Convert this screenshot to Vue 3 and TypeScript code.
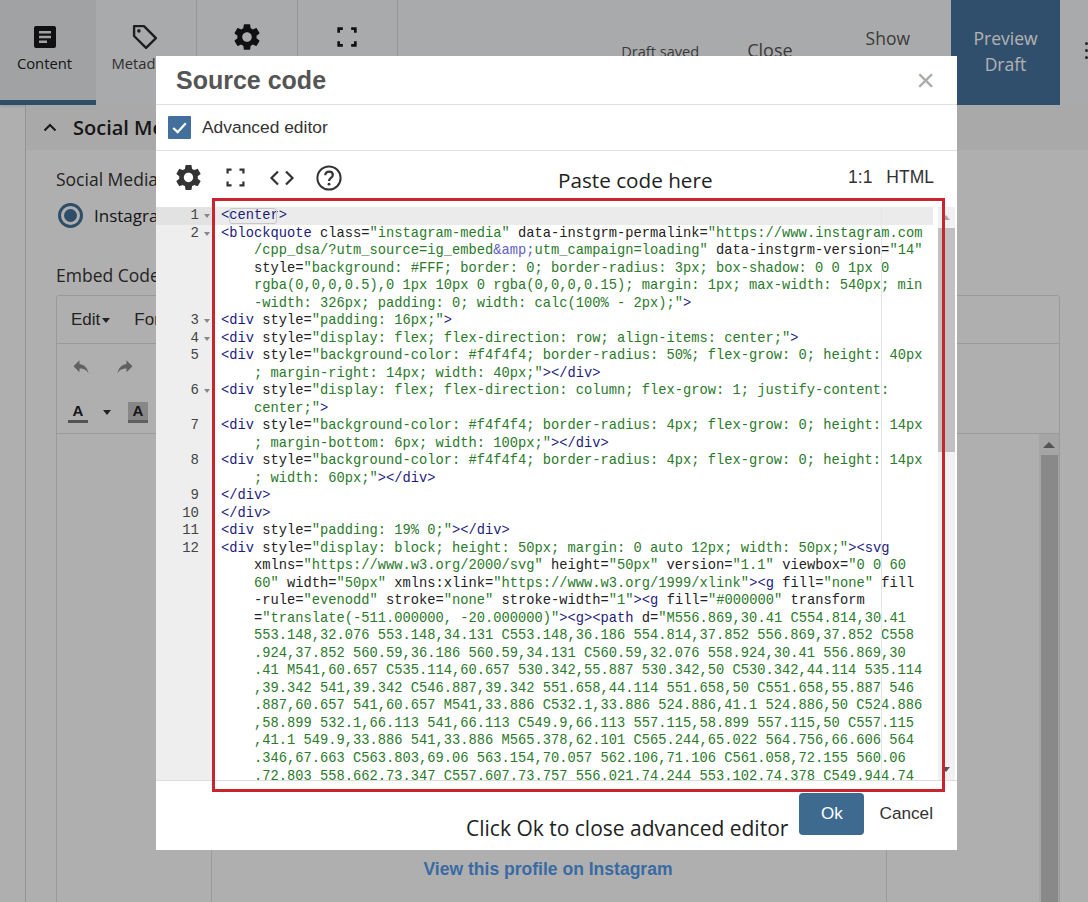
<script setup lang="ts">
const gear = 'M19.14 12.94c.04-.3.06-.61.06-.94 0-.32-.02-.64-.07-.94l2.03-1.58c.18-.14.23-.41.12-.61l-1.92-3.32c-.12-.22-.37-.29-.59-.22l-2.39.96c-.5-.38-1.03-.7-1.62-.94l-.36-2.54c-.04-.24-.24-.41-.48-.41h-3.84c-.24 0-.43.17-.47.41l-.36 2.54c-.59.24-1.13.57-1.62.94l-2.39-.96c-.22-.08-.47 0-.59.22L2.74 8.87c-.12.21-.08.47.12.61l2.03 1.58c-.05.3-.09.63-.09.94s.02.64.07.94l-2.03 1.58c-.18.14-.23.41-.12.61l1.92 3.32c.12.22.37.29.59.22l2.39-.96c.5.38 1.03.7 1.62.94l.36 2.54c.05.24.24.41.48.41h3.84c.24 0 .44-.17.47-.41l.36-2.54c.59-.24 1.13-.56 1.62-.94l2.39.96c.22.08.47 0 .59-.22l1.92-3.32c.12-.22.07-.47-.12-.61l-2.01-1.58zM12 15.6c-1.98 0-3.6-1.62-3.6-3.6s1.62-3.6 3.6-3.6 3.6 1.62 3.6 3.6-1.62 3.6-3.6 3.6z'
const corners = 'M2 7V2h5M17 2h5v5M22 17v5h-5M7 22H2v-5'

type Row = { n?: number; fold?: boolean; text: string }
const rows: Row[] = [
  { n: 1, fold: true, text: '<center>' },
  { n: 2, fold: true, text: '<blockquote class="instagram-media" data-instgrm-permalink="https://www.instagram.com' },
  { text: '    /cpp_dsa/?utm_source=ig_embed&amp;utm_campaign=loading" data-instgrm-version="14"' },
  { text: '    style="background: #FFF; border: 0; border-radius: 3px; box-shadow: 0 0 1px 0' },
  { text: '    rgba(0,0,0,0.5),0 1px 10px 0 rgba(0,0,0,0.15); margin: 1px; max-width: 540px; min' },
  { text: '    -width: 326px; padding: 0; width: calc(100% - 2px);">' },
  { n: 3, fold: true, text: '<div style="padding: 16px;">' },
  { n: 4, fold: true, text: '<div style="display: flex; flex-direction: row; align-items: center;">' },
  { n: 5, text: '<div style="background-color: #f4f4f4; border-radius: 50%; flex-grow: 0; height: 40px' },
  { text: '    ; margin-right: 14px; width: 40px;"></div>' },
  { n: 6, fold: true, text: '<div style="display: flex; flex-direction: column; flex-grow: 1; justify-content:' },
  { text: '    center;">' },
  { n: 7, text: '<div style="background-color: #f4f4f4; border-radius: 4px; flex-grow: 0; height: 14px' },
  { text: '    ; margin-bottom: 6px; width: 100px;"></div>' },
  { n: 8, text: '<div style="background-color: #f4f4f4; border-radius: 4px; flex-grow: 0; height: 14px' },
  { text: '    ; width: 60px;"></div>' },
  { n: 9, text: '</div>' },
  { n: 10, text: '</div>' },
  { n: 11, text: '<div style="padding: 19% 0;"></div>' },
  { n: 12, text: '<div style="display: block; height: 50px; margin: 0 auto 12px; width: 50px;"><svg' },
  { text: '    xmlns="https://www.w3.org/2000/svg" height="50px" version="1.1" viewbox="0 0 60' },
  { text: '    60" width="50px" xmlns:xlink="https://www.w3.org/1999/xlink"><g fill="none" fill' },
  { text: '    -rule="evenodd" stroke="none" stroke-width="1"><g fill="#000000" transform' },
  { text: '    ="translate(-511.000000, -20.000000)"><g><path d="M556.869,30.41 C554.814,30.41' },
  { text: '    553.148,32.076 553.148,34.131 C553.148,36.186 554.814,37.852 556.869,37.852 C558' },
  { text: '    .924,37.852 560.59,36.186 560.59,34.131 C560.59,32.076 558.924,30.41 556.869,30' },
  { text: '    .41 M541,60.657 C535.114,60.657 530.342,55.887 530.342,50 C530.342,44.114 535.114' },
  { text: '    ,39.342 541,39.342 C546.887,39.342 551.658,44.114 551.658,50 C551.658,55.887 546' },
  { text: '    .887,60.657 541,60.657 M541,33.886 C532.1,33.886 524.886,41.1 524.886,50 C524.886' },
  { text: '    ,58.899 532.1,66.113 541,66.113 C549.9,66.113 557.115,58.899 557.115,50 C557.115' },
  { text: '    ,41.1 549.9,33.886 541,33.886 M565.378,62.101 C565.244,65.022 564.756,66.606 564' },
  { text: '    .346,67.663 C563.803,69.06 563.154,70.057 562.106,71.106 C561.058,72.155 560.06' },
  { text: '    .72.803 558.662.73.347 C557.607.73.757 556.021.74.244 553.102.74.378 C549.944.74' },
]

type Seg = { c: string; t: string }
function tokenize(list: Row[]): Seg[][] {
  let inTag = false
  let inName = false
  let inStr = false
  return list.map((row) => {
    const segs: Seg[] = []
    const push = (c: string, t: string) => {
      const last = segs[segs.length - 1]
      if (last && last.c === c) last.t += t
      else segs.push({ c, t })
    }
    const s = row.text
    for (let i = 0; i < s.length; i++) {
      const ch = s[i]
      if (inStr) {
        if (s.startsWith('&amp;', i)) {
          push('ent', '&amp;')
          i += 4
          continue
        }
        push('str', ch)
        if (ch === '"') inStr = false
      } else if (ch === '<') {
        inTag = true
        inName = true
        push('tag', ch)
      } else if (ch === '>') {
        inTag = false
        inName = false
        push('tag', ch)
      } else if (inName) {
        if (ch === ' ') {
          inName = false
          push('atr', ch)
        } else push('tag', ch)
      } else if (ch === '"' && inTag) {
        inStr = true
        push('str', ch)
      } else push('atr', ch)
    }
    return segs
  })
}
const tokens = tokenize(rows)
const lines = rows.map((r, i) => ({ ...r, segs: tokens[i] }))
</script>

<template>
  <div class="page">
    <header class="topbar">
      <nav class="tabs">
        <div class="tab active">
          <svg class="tab-icon" viewBox="0 0 24 24"><path fill="#17181a" d="M3 1h18a2 2 0 0 1 2 2v18a2 2 0 0 1-2 2H3a2 2 0 0 1-2-2V3a2 2 0 0 1 2-2zm3 5v2.4h12V6zm0 4.8v2.4h12v-2.4zm0 4.8V18h8v-2.4z" /></svg>
          <span>Content</span>
        </div>
        <div class="tab second-tab">
          <svg class="tab-icon" viewBox="0 0 24 24"><path fill="none" stroke="#2b2c2e" stroke-width="2.3" stroke-linejoin="round" d="M2 2h9.5L23 13.5 13.5 23 2 11.5z" /><circle cx="6.6" cy="6.6" r="1.7" fill="#2b2c2e" /></svg>
          <span>Metadata</span>
        </div>
        <div class="tab">
          <svg class="tab-icon big" viewBox="0 0 24 24"><path fill="#17181a" :d="gear" /></svg>
        </div>
        <div class="tab">
          <svg class="tab-icon small" viewBox="0 0 24 24"><path fill="none" stroke="#17181a" stroke-width="3.2" :d="corners" /></svg>
        </div>
      </nav>
      <div class="actions">
        <span class="saved">Draft saved</span>
        <span class="close-link">Close</span>
        <span class="show">Show</span>
        <div class="preview">Preview<br />Draft</div>
        <div class="more"><i></i><i></i><i></i></div>
      </div>
    </header>

    <main class="body">
      <section class="panel">
        <div class="panel-head">
          <svg class="chev" viewBox="0 0 14 9"><path d="M1.5 7.5 7 2l5.5 5.5" fill="none" stroke="#222" stroke-width="2" /></svg>
          <strong>Social Media</strong>
        </div>
        <div class="panel-body">
          <div class="label">Social Media</div>
          <div class="radio-row"><span class="radio"><span></span></span><span>Instagram</span></div>
          <div class="label embed">Embed Code</div>
          <div class="tiny">
            <div class="tiny-menu"><span>Edit<i class="caret"></i></span><span class="fmt">Format</span></div>
            <div class="tiny-tools">
              <div class="tool-row">
                <svg class="u" viewBox="0 0 24 24"><path fill="#8b8b8b" d="M10 8V3L2 11l8 8v-5c6 0 10 2 12 7-1-7-5-12-12-13z" /></svg>
                <svg class="u" viewBox="0 0 24 24"><path fill="#8b8b8b" d="M14 8V3l8 8-8 8v-5C8 14 4 16 2 21c1-7 5-12 12-13z" /></svg>
              </div>
              <div class="tool-row second">
                <span class="afore">A</span><i class="caret dark"></i><span class="aback">A</span>
              </div>
            </div>
            <div class="tiny-area">
              <div class="embed-card"><a>View this profile on Instagram</a></div>
              <div class="tiny-scroll"><b></b><span></span></div>
            </div>
          </div>
        </div>
      </section>
    </main>

    <div class="backdrop"></div>

    <div class="modal">
      <div class="m-head"><h1>Source code</h1><span class="x">×</span></div>
      <div class="m-check">
        <span class="cb"><svg viewBox="0 0 22 22"><path d="M5 11.5l4.2 4L17 7" fill="none" stroke="#fff" stroke-width="2.2" /></svg></span>
        <span>Advanced editor</span>
      </div>
      <div class="m-tools">
        <svg class="mi gear" viewBox="0 0 24 24"><path fill="#333" :d="gear" /></svg>
        <svg class="mi corners" viewBox="0 0 24 24"><path fill="none" stroke="#333" stroke-width="2.8" :d="corners" /></svg>
        <svg class="mi angle" viewBox="0 0 26 18"><path fill="none" stroke="#333" stroke-width="2.2" d="M9 2.5 2.5 9 9 15.5M17 2.5 23.5 9 17 15.5" /></svg>
        <svg class="mi help" viewBox="0 0 26 26"><circle cx="13" cy="13" r="11.6" fill="none" stroke="#333" stroke-width="2" /><path fill="none" stroke="#333" stroke-width="2.2" d="M9.3 10.2c0-2.2 1.6-3.6 3.8-3.6s3.7 1.3 3.7 3.3c0 3-3.8 2.9-3.8 6" /><circle cx="13" cy="19.2" r="1.4" fill="#333" /></svg>
        <span class="paste">Paste code here</span>
        <span class="pos">1:1</span>
        <span class="mode">HTML</span>
      </div>
      <div class="editor">
        <div class="code">
          <div v-for="(l, i) in lines" :key="i" class="row" :class="{ on: i === 0 }">
            <span class="gut"><span class="num">{{ l.n }}</span><i v-if="l.fold" class="fold"></i></span>
            <span class="src"><span v-for="(s, j) in l.segs" :key="j" :class="s.c">{{ s.t }}</span></span>
          </div>
          <div class="margin-line"></div>
          <div class="bracket"></div>
        </div>
        <div class="sb"><i class="sb-up"></i><b></b><i class="sb-down"></i></div>
      </div>
      <div class="m-foot">
        <span class="click">Click Ok to close advanced editor</span>
        <button class="ok">Ok</button>
        <span class="cancel">Cancel</span>
      </div>
      <div class="redbox"></div>
    </div>
  </div>
</template>

<style>
html, body { margin: 0; height: 100%; overflow: hidden; }
</style>

<style scoped>
.page {
  position: relative;
  width: 1088px;
  height: 902px;
  overflow: hidden;
  background: #fbfbfb;
  font-family: "Open Sans", sans-serif;
  color: #222;
}
.topbar {
  height: 105px;
  display: flex;
  justify-content: space-between;
  background: #f3f4f6;
  box-shadow: 0 1px 3px rgba(0,0,0,.15);
  position: relative;
}
.tabs { display: flex; }
.tab {
  width: 100.8px;
  box-sizing: border-box;
  border-right: 1px solid #d6d7da;
  display: flex;
  flex-direction: column;
  align-items: center;
  padding-top: 25px;
  font-size: 14.8px;
  color: #444;
  gap: 5px;
}
.tab.active {
  width: 96px;
  background: #e6e8eb;
  border-bottom: 5px solid #436f95;
  border-right: 0;
  color: #222;
  padding-right: 7px;
}
.tab.active span { margin-top: -1px; }
.second-tab { padding-right: 3px; }
.tab-icon { width: 24px; height: 24px; flex: none; }
.second-tab .tab-icon { width: 25px; height: 25px; margin-top: -1px; margin-bottom: -1px; }
.tab-icon.big { width: 32px; height: 32px; margin-top: -4px; }
.tab-icon.small { width: 20px; height: 20px; margin-top: 2px; }
.actions { display: flex; align-items: flex-start; }
.saved { font-size: 14.6px; margin: 41px 48px 0 0; color: #555; }
.close-link { font-size: 18px; margin: 38px 73px 0 0; color: #555; }
.show { font-size: 17.5px; margin: 26px 41px 0 0; color: #555; }
.preview {
  width: 109px;
  height: 105px;
  box-sizing: border-box;
  padding-top: 25px;
  background: #436f9c;
  color: #fff;
  text-align: center;
  font-size: 17.5px;
  line-height: 26px;
  opacity: .98;
}
.more { width: 28px; padding: 42px 0 0 25px; box-sizing: border-box; }
.more i { display: block; width: 3px; height: 3px; border-radius: 50%; background: #333; margin-bottom: 4px; }

.body { padding: 0 28px 0 25px; position: relative; }
.panel { border-left: 1px solid #d3d3d3; margin-right: 0; }
.panel-head {
  height: 45px;
  display: flex;
  align-items: center;
  gap: 16px;
  padding-left: 17px;
  background: #f3f3f3;
  font-size: 20px;
  margin-right: -28px;
}
.chev { width: 14px; height: 9px; }
.panel-head strong { font-weight: 600; }
.panel-body { padding: 17px 0 0 30px; }
.label { font-size: 17.5px; line-height: 24px; color: #333; }
.label.embed { margin-top: 35px; }
.radio-row { display: flex; align-items: center; gap: 11px; font-size: 17px; margin-top: 11px; margin-left: 2px; height: 26px; }
.radio { width: 25px; height: 25px; box-sizing: border-box; border: 3px solid #436f95; border-radius: 50%; display: flex; align-items: center; justify-content: center; }
.radio span { width: 13px; height: 13px; border-radius: 50%; background: #436f95; }
.tiny { margin-top: 8px; border: 1px solid #ddd; border-radius: 3px; width: 1004px; box-sizing: border-box; height: 640px; display: flex; flex-direction: column; }
.tiny-menu { height: 48px; flex: none; border-bottom: 1px solid #ddd; display: flex; align-items: center; gap: 24px; padding-left: 14px; font-family: "Liberation Sans", sans-serif; font-size: 17px; color: #333; box-sizing: border-box; }
.caret { display: inline-block; width: 0; height: 0; border: 4px solid transparent; border-top: 5px solid #333; border-bottom: 0; margin-left: 2px; vertical-align: middle; }
.tiny-tools { height: 89px; flex: none; border-bottom: 1px solid #ddd; }
.tool-row { display: flex; gap: 26px; padding: 14px 0 0 15px; height: 28px; }
.u { width: 18px; height: 18px; }
.tool-row.second { gap: 0; align-items: flex-start; padding-top: 16px; padding-left: 11px; }
.afore { font: bold 15px "Liberation Sans", sans-serif; width: 20px; text-align: center; border-bottom: 3px solid #777; line-height: 18px; }
.caret.dark { margin: 8px 17px 0 15px; border-width: 5px 4px 0; }
.aback { font: bold 15px "Liberation Sans", sans-serif; width: 20px; text-align: center; background: #c2c2c2; border-bottom: 3px solid #888; line-height: 18px; }
.tiny-area { flex: 1; position: relative; }
.embed-card { position: absolute; left: 154px; top: 0; width: 676px; height: 560px; box-sizing: border-box; border: 1px solid #ddd; padding-top: 423px; padding-right: 2px; text-align: center; }
.embed-card a { font: bold 17.55px "Liberation Sans", sans-serif; color: #5499ea; }
.tiny-scroll { position: absolute; right: 0; top: 0; bottom: 0; width: 20px; background: #ededed; }
.tiny-scroll b { display: block; width: 0; height: 0; margin: 8px auto 0; border: 6px solid transparent; border-bottom: 6px solid #777; border-top: 0; }
.tiny-scroll span { display: block; width: 17px; margin: 7px auto 0; height: 500px; background: #c4c4c4; }

.backdrop { position: absolute; inset: 0; background: rgba(0,0,0,.3); }
.modal {
  position: absolute;
  left: 156px;
  top: 56px;
  width: 801px;
  height: 794px;
  background: #fff;
  display: flex;
  flex-direction: column;
  font-family: "Liberation Sans", sans-serif;
  color: #333;
}
.m-head { height: 49px; box-sizing: border-box; border-bottom: 1px solid #e0e0e0; display: flex; align-items: center; justify-content: space-between; padding: 0 22px 0 20px; }
.m-head h1 { margin: 0; font-size: 25px; font-weight: 700; color: #555; }
.x { font-size: 32px; color: #aaa; line-height: 1; }
.m-check { height: 46px; box-sizing: border-box; border-bottom: 1px solid #e0e0e0; display: flex; align-items: center; gap: 11px; padding-left: 12px; font-size: 17.4px; }
.cb { width: 23px; height: 23px; background: #436f9c; border-radius: 1px; display: block; }
.cb svg { display: block; }
.m-tools { height: 56px; flex: none; display: flex; align-items: center; padding: 0 23px 3px 18px; position: relative; box-sizing: border-box; }
.mi { flex: none; }
.gear { width: 31px; height: 31px; margin-left: -1.5px; }
.corners { width: 19px; height: 19px; margin-left: 22px; }
.angle { width: 26px; height: 18px; margin-left: 24.5px; }
.help { width: 26px; height: 26px; margin-left: 21px; }
.paste { position: absolute; left: 402px; top: 15px; font: 20.7px "Open Sans", sans-serif; color: #222; }
.pos { margin-left: auto; font-size: 17.5px; }
.mode { margin-left: 14px; font-size: 17.5px; }
.editor { height: 573px; flex: none; display: flex; border-bottom: 1px solid #ddd; overflow: hidden; }
.code { flex: 1; position: relative; background: #fff; }
.row { display: flex; height: 17.53px; font: 13.75px/17.53px "Liberation Mono", monospace; white-space: pre; }
.gut { width: 56px; flex: none; background: #eee; position: relative; color: #444; text-align: right; }
.num { position: absolute; right: 13px; font-size: 14px; }
.fold { position: absolute; right: 2px; top: 7px; border: 3.5px solid transparent; border-top: 4px solid #888; border-bottom: 0; }
.src { padding-left: 9px; flex: 1; }
.row.on .src { background: #ebebeb; }
.row.on .gut { background: #e2e2e2; }
.tag { color: #1c1c7c; }
.atr { color: #222; }
.str { color: #2a7a2a; }
.ent { color: #6060c0; }
.margin-line { position: absolute; left: 725px; top: 0; bottom: 0; width: 1px; background: #e6e6e6; }
.bracket { position: absolute; left: 73px; top: 1px; width: 48px; height: 16px; box-sizing: border-box; border: 1px solid #c8c8c8; border-radius: 3px; }
.sb { width: 24px; flex: none; background: #fff; position: relative; }
.sb::before { content: ""; position: absolute; left: 5px; top: 0; bottom: 0; width: 17px; background: #f1f1f1; }
.sb b { position: absolute; left: 5px; top: 21px; width: 17px; height: 224px; background: #c1c1c1; }
.sb-up { position: absolute; left: 9px; top: 8px; border: 4px solid transparent; border-bottom: 5px solid #aaa; border-top: 0; }
.sb-down { position: absolute; left: 9px; bottom: 8px; border: 4px solid transparent; border-top: 5px solid #555; border-bottom: 0; }
.m-foot { flex: 1; position: relative; display: flex; align-items: flex-start; justify-content: flex-end; padding: 13px 24px 0 0; }
.click { position: absolute; left: 310px; top: 33px; font: 21px "Open Sans", sans-serif; color: #222; }
.ok { width: 65px; height: 42px; border: 0; border-radius: 4px; background: #3e6a90; color: #fff; font: 17px "Liberation Sans", sans-serif; padding: 0; margin-top: -1px; }
.cancel { margin-left: 15px; margin-top: 9px; font-size: 17.2px; color: #333; }
.redbox { position: absolute; left: 56px; top: 142px; width: 733px; height: 594px; box-sizing: border-box; border: 3px solid #c9252f; pointer-events: none; }
</style>
